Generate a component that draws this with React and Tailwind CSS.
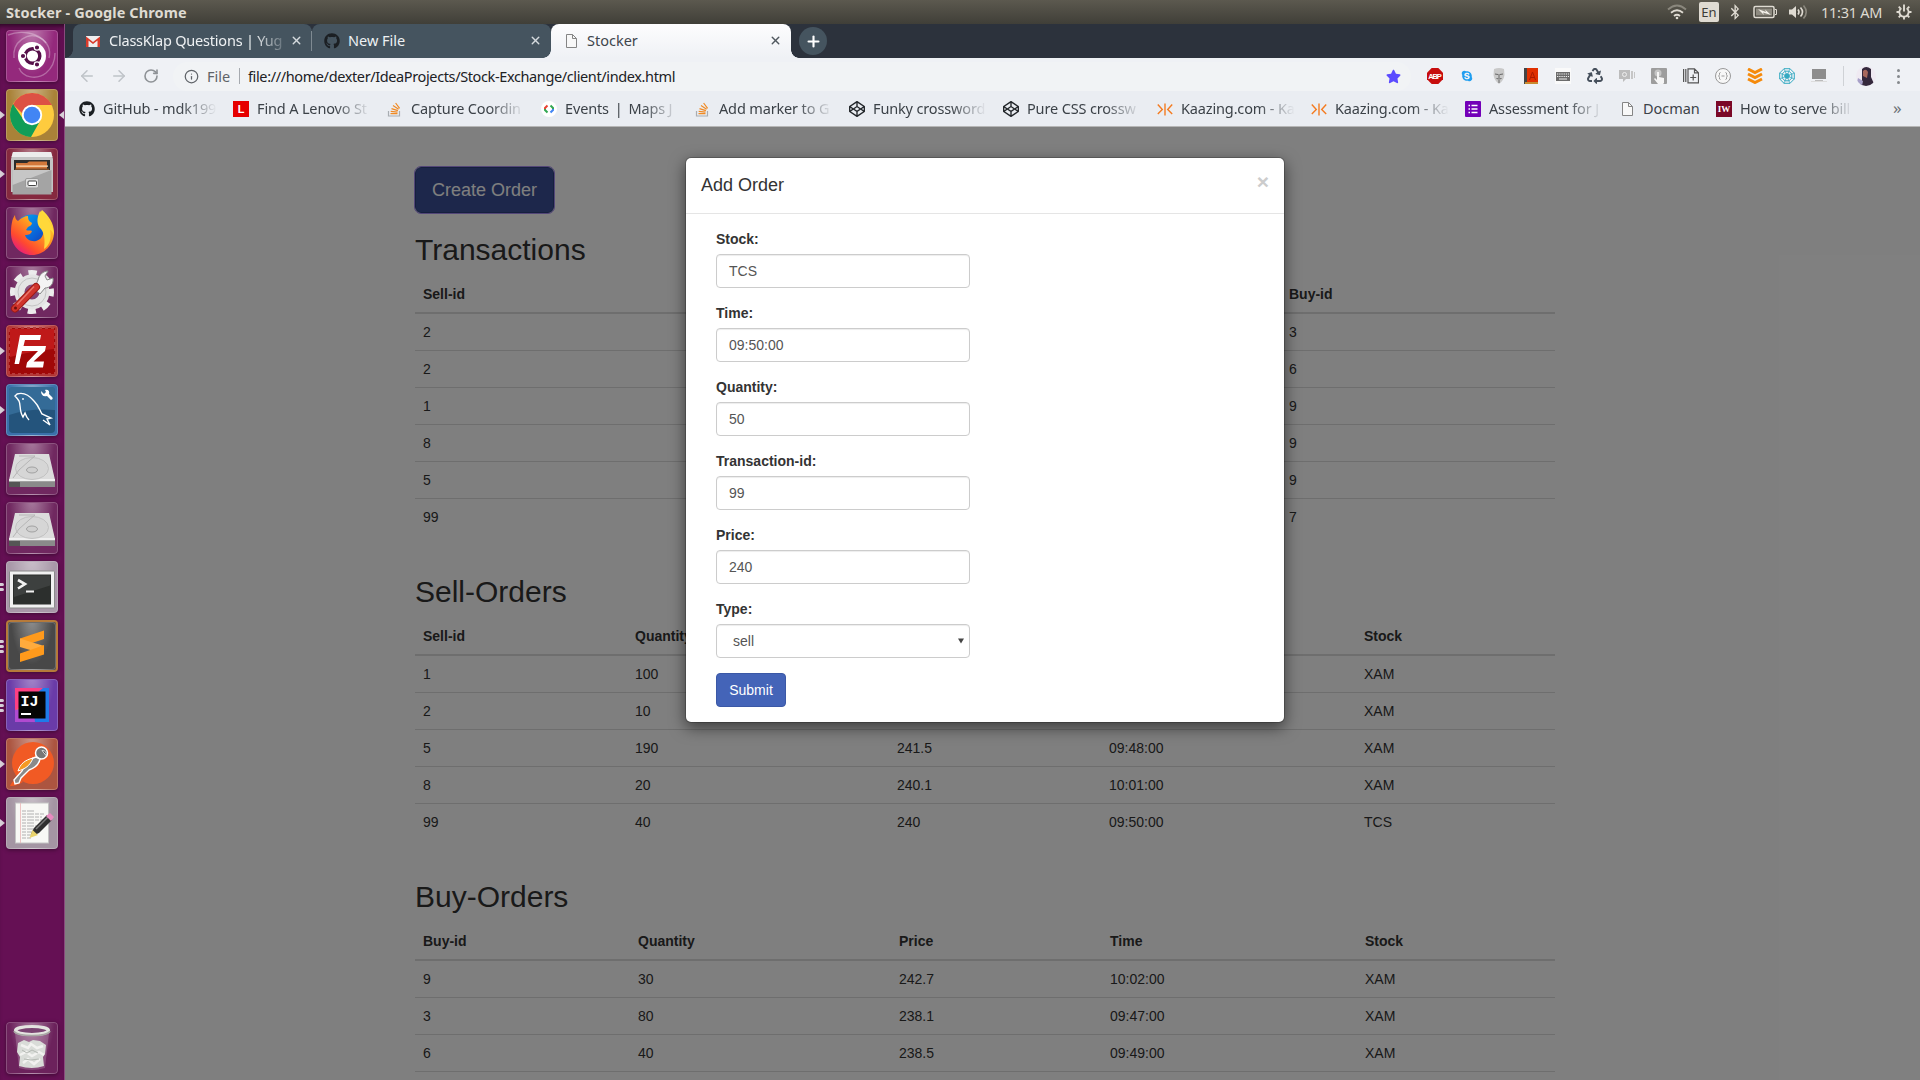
import React from "react";
import { FaGithub, FaBluetoothB, FaCodepen, FaStar, FaRecycle, FaSkype } from "react-icons/fa";
import { ArrowLeft, ArrowRight, RotateCw, X, Plus, Info } from "lucide-react";

const UI = "font-['Noto_Sans',sans-serif]";

/* ---------- launcher glyphs, 52 x 52 each ---------- */
const UbuntuGlyph = () => (
  <svg viewBox="0 0 52 52" className="size-full">
    <g fill="none" stroke="#fff" strokeOpacity=".3" strokeWidth="1.4">
      <path d="M8 28C6 12 22 1 34 8c8 4 11 12 9 20" />
      <path d="M2 5c12-5 30-3 38 8" />
      <path d="M13 38c4 10 18 12 27 5 6-5 9-12 9-20" />
    </g>
    <circle cx="26" cy="26" r="14" fill="#fff" />
    <circle cx="26.500" cy="26" r="7.300" fill="none" stroke="#56104a" strokeWidth="3.400" />
    <g stroke="#fff" strokeWidth="1.200" fill="#56104a">
      <circle cx="17" cy="26" r="2.700" />
      <circle cx="31" cy="17.500" r="2.700" />
      <circle cx="31" cy="34.500" r="2.700" />
    </g>
  </svg>
);
const ChromeGlyph = () => (
  <svg viewBox="0 0 52 52" className="size-full">
    <circle cx="26" cy="26" r="22" fill="#fecb3e" />
    <path d="M26 4A22 22 0 0 1 46 16H26L16 24 7 15.500A22 22 0 0 1 26 4z" fill="#dd5144" />
    <path d="M7 15A22 22 0 0 0 25 48L34 32 26 26 17 30z" fill="#109d58" />
    <circle cx="26" cy="26" r="10.200" fill="#fff" />
    <circle cx="26" cy="26" r="8.300" fill="#4285f4" />
  </svg>
);
const FilesGlyph = () => (
  <svg viewBox="0 0 52 52" className="size-full">
    <path d="M7 4h38l2 7v33H5V11z" fill="#c4c4c4" />
    <path d="M7 4h38l1.500 5h-41z" fill="#ececec" />
    <path d="M8 12h36v10H8z" fill="#2c2c2c" />
    <path d="M10 15h11l2-1.500h18V22H10z" fill="#d2773a" />
    <path d="M10 17.500h32v1.300H10z" fill="#fde0bd" />
    <path d="M9 20.500h34v1.500H9z" fill="#7a4a28" />
    <path d="M6.500 22h39v24.500h-39z" fill="#a4a4a4" />
    <path d="M6.500 22h39L6.500 37z" fill="#c6c6c6" />
    <rect x="19.500" y="30.500" width="13" height="9.500" rx="1.500" fill="#dcdcdc" stroke="#999" />
    <rect x="22" y="33" width="8.500" height="4.500" rx="1" fill="#fff" stroke="#444" />
  </svg>
);
const FirefoxGlyph = () => (
  <svg viewBox="0 0 52 52" className="size-full">
    <defs>
      <linearGradient id="fx1" x1="0.900" y1="0.100" x2="0.200" y2="1">
        <stop offset="0" stopColor="#ffe83e" />
        <stop offset=".4" stopColor="#ff9a1f" />
        <stop offset=".75" stopColor="#ff4a2f" />
        <stop offset="1" stopColor="#e31587" />
      </linearGradient>
      <linearGradient id="fx2" x1="0" y1="0" x2="1" y2="1">
        <stop offset="0" stopColor="#00b3f4" />
        <stop offset=".6" stopColor="#0a5fd6" />
        <stop offset="1" stopColor="#2a2a8c" />
      </linearGradient>
    </defs>
    <circle cx="26" cy="25" r="17.500" fill="url(#fx2)" />
    <path d="M9 8c0 3 1 5 3 6 3-3 7-5 10-5 0 4 1 5 4 7 0 2-2 3-4 4l-2 3c2 1 4 0 6 1-1 3-3 4-7 4 1 4 6 7 11 6 7-2 9-9 6-15-1-2-2-3-4-4 0-6 2-9 4-12 7 6 12 14 12 22 0 13-10 23-22 23S5 38 5 26c0-7 1-14 4-18z" fill="url(#fx1)" />
    <path d="M34 4c5 6 14 13 14 24-1-3-3-5-4-5 2 9-1 16-6 19 1-7 1-15-3-20-4-4-5-10-1-18z" fill="#ffd83a" />
  </svg>
);
const GearGlyph = () => (
  <svg viewBox="0 0 52 52" className="size-full">
    <circle cx="26" cy="26" r="18.500" fill="none" stroke="#ececec" strokeWidth="7" strokeDasharray="8 6.530" strokeDashoffset="4" />
    <circle cx="26" cy="26" r="12.500" fill="none" stroke="#e4e4e4" strokeWidth="10" />
    <circle cx="26" cy="26" r="14" fill="none" stroke="#c4c4c4" strokeWidth="1" />
    <path d="M32 14c1-5 5-9 10-9l-3 5 2 4 6-2c1 6-3 10-8 10l-5 6-6-5z" fill="#f4f4f4" stroke="#888" strokeWidth="1" />
    <path d="M9 42.500 30 21" stroke="#9c1a16" strokeWidth="8" strokeLinecap="round" />
    <path d="M9 42.500 30 21" stroke="#cf342b" strokeWidth="6" strokeLinecap="round" />
    <path d="M11 38.500 28 20.500" stroke="#e8766c" strokeWidth="1.500" />
    <circle cx="9.500" cy="42" r="1.500" fill="#6b0f0c" />
  </svg>
);
const FilezillaGlyph = () => (
  <svg viewBox="0 0 52 52" className="size-full">
    <rect x="3" y="3" width="46" height="46" fill="#a00808" stroke="#b83a3a" strokeWidth="2" strokeDasharray="3 3" />
    <path d="M4 4h44v20q-22 2-44 8z" fill="#cc2121" fillOpacity=".7" />
    <path d="M14 10h21l-1 5H19l-1.500 6H28l-1 5H16l-3 13H8.500z" fill="#fff" />
    <path d="M24 21h16l-1 5-11.500 10.500H38l-1 6H20l1-5 11-11.500h-9z" fill="#fff" />
  </svg>
);
const DolphinGlyph = () => (
  <svg viewBox="0 0 52 52" className="size-full">
    <rect x="3" y="3" width="46" height="46" rx="4" fill="#24547c" />
    <path d="M3 7a4 4 0 0 1 4-4h38a4 4 0 0 1 4 4v19q-24-2-46 5z" fill="#3f7caa" fillOpacity=".6" />
    <path d="M23 36c-2-2-3-4-4-7l-2 4c-4-6-2-12-4-16-2-3-4-5-4-5l2-2c6-2 12 1 17 7 5 5 6 10 8 13l9 4-4 1 3 6-7-5" fill="none" stroke="#fff" strokeWidth="1.400" />
    <circle cx="17" cy="15" r=".9" fill="#fff" />
    <path d="M35 7l3 3 2-2-1-2c3-1 5 1 4 4l3 3c2 2-1 4-2 2l-3-3c-4 1-6-1-6-5z" fill="#fff" />
  </svg>
);
const DriveGlyph = () => (
  <svg viewBox="0 0 52 52" className="size-full">
    <path d="M9 11h34l6 26v7H3v-7z" fill="#dcdcdc" />
    <path d="M3 37h46v7H3z" fill="#555" />
    <path d="M3 36h46v2.500H3z" fill="#f0f0f0" />
    <rect x="14" y="39" width="35" height="5" fill="#8a8a8a" />
    <ellipse cx="26" cy="25.500" rx="16.500" ry="11" fill="#d6d6d6" stroke="#c2c2c2" />
    <ellipse cx="26" cy="27" rx="5.500" ry="3" fill="#cfcfcf" stroke="#a2a2a2" />
    <path d="M13 13h16l-6 5-10 9-6 8" fill="none" stroke="#b6b6b6" />
  </svg>
);
const TerminalGlyph = () => (
  <svg viewBox="0 0 52 52" className="size-full">
    <rect x="3.500" y="10" width="45" height="37" rx="1" fill="#f1f1f1" stroke="#8a8a8a" />
    <rect x="7" y="13.500" width="38" height="30" fill="#2c2f2d" />
    <path d="M8 14.500h36v10L8 36z" fill="#4a4d4b" fillOpacity=".6" />
    <path d="M12 19l7 4-7 4.500" fill="none" stroke="#f1f1f1" strokeWidth="2.600" />
    <path d="M20 30.500h8" stroke="#f1f1f1" strokeWidth="2" />
  </svg>
);
const SublimeGlyph = () => (
  <svg viewBox="0 0 52 52" className="size-full">
    <path d="M14 18.500 38 10.500v8.500L14 27z" fill="#ff9a1c" />
    <path d="M14 18.500 38 26v8L14 27z" fill="#ffab3d" />
    <path d="M38 25v9.500L14 42v-8.500L30 28z" fill="#ff9a1c" />
  </svg>
);
const IdeaGlyph = () => (
  <svg viewBox="0 0 52 52" className="size-full">
    <path d="M9 9h34v34H9z" fill="#1f7bea" />
    <path d="M9 9h25L20 43H9z" fill="#f7923a" />
    <path d="M9 9h28L9 32z" fill="#fe3f83" />
    <path d="M9 31l18-4 2 16H9z" fill="#b04ad0" />
    <rect x="12.500" y="12.500" width="27" height="27" fill="#050505" />
    <text x="14.500" y="27" fontFamily="Liberation Mono" fontWeight="700" fontSize="15" fill="#fff">IJ</text>
    <path d="M15 35h10" stroke="#fff" strokeWidth="2" />
  </svg>
);
const PostmanGlyph = () => (
  <svg viewBox="0 0 52 52" className="size-full">
    <circle cx="27" cy="25" r="21" fill="#f15a24" />
    <path d="M4 48c2-5 5-6 9-8l4 4c-4 2-7 4-13 4z" fill="#f15a24" />
    <circle cx="35.500" cy="15" r="6" fill="#777" stroke="#fff" strokeWidth="1.500" />
    <path d="M36 12.500q5 0 4 5z" fill="#444" stroke="#ddd" />
    <path d="M30 19c-7 2-12 8-14 14l-8 9 1 4 4-1 2-5 8-8c6-2 10-6 11-11z" fill="#8a8a8a" stroke="#fff" strokeWidth="1.400" />
    <path d="M27 20c-8 2-13 6-15 13 7-2 12-5 15-13z" fill="#f59a23" stroke="#fff" />
  </svg>
);
const EditorGlyph = () => (
  <svg viewBox="0 0 52 52" className="size-full">
    <rect x="9.500" y="6" width="33" height="40" fill="#f8f8f5" stroke="#c4c4c4" />
    <path d="M14.500 6v40" stroke="#eab6b6" strokeWidth=".8" />
    <g stroke="#b0b0b0" strokeWidth="1" strokeDasharray="4 1 7 1">
      <path d="M16 14h12M16 17h22M16 20h20M16 23h23M16 26h12M16 29h17M16 32h15M16 35h12M16 38h10M16 41h9" />
    </g>
    <path d="M25 37l3-6L41 18l5 5-13 13-7 3z" fill="#303030" />
    <path d="M23.500 41l3-8 5.500 5z" fill="#e9d36c" />
    <path d="M30 32l12-12" stroke="#7a7a7a" strokeWidth="1.500" />
    <path d="M40 19l4-3 4 4-3 4z" fill="#e88bc0" />
  </svg>
);
const TrashGlyph = () => (
  <svg viewBox="0 0 52 52" className="size-full">
    <path d="M9 11h34l-4 35q-13 4-26 0z" fill="#fff" fillOpacity=".18" />
    <path d="M12 21l6-3 5 2 4-2 7 1 6 4-1 9-2 3 1 9q-12 4-25 0l1-9-3-5z" fill="#d9dcd8" />
    <path d="M15 23l7 3 3-4 6 4 6-2M14 33l6-3 6 4 7-4 5 3M17 41l5-4 6 5 6-5" stroke="#f2f2f0" strokeWidth="2.500" fill="none" />
    <path d="M16 28l5 3 5-3 6 3M18 37l7 1 8-1" stroke="#b4b9b3" fill="none" />
    <ellipse cx="26" cy="8.500" rx="16.500" ry="4" fill="#7a4472" stroke="#e4e4e0" strokeWidth="3.200" />
    <path d="M8 9c2 6 34 6 36 0" fill="none" stroke="#a8a8a4" strokeWidth="1.500" />
  </svg>
);

const LAUNCHER = [
  { n: "ubuntu", g: UbuntuGlyph, bg: "bg-[#94297c]", left: 0 },
  { n: "chrome", g: ChromeGlyph, bg: "bg-[#a98238]", left: 1, focus: true },
  { n: "files", g: FilesGlyph, bg: "bg-[#85293f]", left: 1 },
  { n: "firefox", g: FirefoxGlyph, bg: "bg-[#702860]", left: 0 },
  { n: "settings", g: GearGlyph, bg: "bg-[#702860]", left: 0 },
  { n: "filezilla", g: FilezillaGlyph, bg: "bg-[#b03434]", left: 1 },
  { n: "workbench", g: DolphinGlyph, bg: "bg-[#3a70aa]", left: 1 },
  { n: "drive1", g: DriveGlyph, bg: "bg-[#702860]", left: 0 },
  { n: "drive2", g: DriveGlyph, bg: "bg-[#702860]", left: 0 },
  { n: "terminal", g: TerminalGlyph, bg: "bg-[#a898a8]", left: 2 },
  { n: "sublime", g: SublimeGlyph, bg: "bg-[#484848] border-2 border-[#b67a3a]", left: 3 },
  { n: "idea", g: IdeaGlyph, bg: "bg-[#6a3ba8]", left: 3 },
  { n: "postman", g: PostmanGlyph, bg: "bg-[#ac5540]", left: 1 },
  { n: "gedit", g: EditorGlyph, bg: "bg-[#a495a3]", left: 1 },
];

function Tile({ item }) {
  const Glyph = item.g;
  return (
    <div className="relative flex h-[52px] w-full items-center pl-[6px]">
      {item.left === 1 && <div className="absolute left-0 h-0 w-0 border-y-4 border-l-[5px] border-y-transparent border-l-[#d8d0d8]" />}
      {item.left > 1 && (
        <div className="absolute left-0 flex flex-col gap-[2px]">
          {Array.from({ length: item.left }, (_, i) => (
            <div key={i} className="h-[3px] w-[4px] rounded-r-full bg-[#d8d0d8]" />
          ))}
        </div>
      )}
      <div className={`relative size-[52px] overflow-hidden rounded-[4px] shadow-[0_1px_4px_rgba(0,0,0,0.4)] ${item.bg}`}>
        <div className="absolute inset-0 rounded-[4px] border border-white/20 bg-[radial-gradient(ellipse_at_50%_-10%,rgba(255,255,255,0.4),rgba(255,255,255,0)_65%)]" />
        <div className={item.n === "sublime" ? "relative -m-[2px] size-[52px]" : "relative size-full"}>
          <Glyph />
        </div>
      </div>
      {item.focus && <div className="absolute right-0 h-0 w-0 border-y-4 border-r-[5px] border-y-transparent border-r-[#d8d0d8]" />}
    </div>
  );
}

/* ---------- small icons ---------- */
const PageIcon = () => (
  <svg viewBox="0 0 16 16" className="size-4 shrink-0" fill="none" stroke="#858585" strokeWidth="1">
    <path d="M3.500 1.500h6l4 4v9h-10z" fill="#f8f8f8" />
    <path d="M9.500 1.500v4h4" />
  </svg>
);
const MailIcon = () => (
  <svg viewBox="0 0 16 16" className="size-4 shrink-0">
    <path d="M1 3h14v11H1z" fill="#eee" />
    <path d="M1 14V3.500L8 9l7-5.500V14h-2.500V7.500L8 11 3.500 7.500V14z" fill="#d93b2b" />
  </svg>
);
const LenovoIcon = () => <div className="flex size-4 shrink-0 items-center justify-center bg-[#e60000] text-[11px] font-bold text-white font-['Liberation_Sans',sans-serif]">L</div>;
const IwIcon = () => <div className="flex size-4 shrink-0 items-center justify-center bg-[#7b0827] text-[9px] font-bold text-white font-['Liberation_Serif',serif]">IW</div>;
const DevIcon = () => (
  <svg viewBox="0 0 16 16" className="size-4 shrink-0" fill="none" strokeWidth="2">
    <circle cx="8" cy="8" r="8" fill="#fff" />
    <path d="M6.500 4.500 4 7v1" stroke="#ea4335" />
    <path d="M4 8v1l2.500 2.500" stroke="#34a853" />
    <path d="M9.500 4.500L12 7v1" stroke="#34a853" />
    <path d="M12 8v1l-2.500 2.500" stroke="#4285f4" />
  </svg>
);
const KaazingIcon = () => (
  <svg viewBox="0 0 16 16" className="size-4 shrink-0" fill="none" stroke="#f47b20" strokeWidth="1.400">
    <path d="M.8 3.500l4.500 5-4.500 4.500M8 2.500v12M15.200 3.500l-4.500 5 4.500 4.500" />
  </svg>
);
const FormsIcon = () => (
  <svg viewBox="0 0 16 16" className="size-4 shrink-0">
    <rect width="16" height="16" rx="1" fill="#7300b8" />
    <path d="M3.500 4.500h1.500M3.500 8h1.500M3.500 11.500h1.500M6.500 4.500h6M6.500 8h6M6.500 11.500h6" stroke="#fff" strokeWidth="1.600" />
  </svg>
);
const Git = () => <FaGithub className="size-4 shrink-0 text-[#1b1f23]" />;
const Stack = () => (
  <svg viewBox="0 0 16 16" className="size-4 shrink-0" fill="none">
    <path d="M1.500 10v5h11v-5" stroke="#a8adb2" strokeWidth="1.200" />
    <path d="M3.500 12.600h7M3.700 10.300l6.800.8M4.500 7.600l6.400 2M6 4.600l5.600 3.600M8.600 2l4 5.300" stroke="#f08a24" strokeWidth="1.200" />
  </svg>
);
const Pen = () => <FaCodepen className="size-4 shrink-0 text-[#24282c]" />;

const BOOKMARKS = [
  [Git, "GitHub - mdk199"],
  [LenovoIcon, "Find A Lenovo St"],
  [Stack, "Capture Coordin"],
  [DevIcon, "Events\u2009 |\u2009 Maps J"],
  [Stack, "Add marker to G"],
  [Pen, "Funky crossword"],
  [Pen, "Pure CSS crossw"],
  [KaazingIcon, "Kaazing.com - Ka"],
  [KaazingIcon, "Kaazing.com - Ka"],
  [FormsIcon, "Assessment for J"],
  [PageIcon, "Docman", true],
  [IwIcon, "How to serve bill"],
];

const EXT = [
  <svg key="abp" viewBox="0 0 16 16" className="size-4"><path d="M4.700 0h6.600L16 4.700v6.600L11.300 16H4.700L0 11.300V4.700z" fill="#c70d0d" /><text x="8" y="10.900" textAnchor="middle" fontSize="7.500" fontWeight="700" fontFamily="Liberation Sans" fill="#fff" textLength="13.500">ABP</text></svg>,
  <FaSkype key="skype" className="size-3 text-[#1f9ef0]" />,
  <svg key="mask" viewBox="0 0 16 16" className="size-4"><path d="M3 1q5-2 10 0l.5 6q-1 6-5.500 9-4.500-3-5.500-9z" fill="#c9c9c9" /><path d="M4 6l3 .5M9 6.500l3-.5M8 6v4M5.500 10.500q2.500 1 5 0M8 12v3" stroke="#666" fill="none" /></svg>,
  <svg key="book" viewBox="0 0 16 16" className="size-4"><path d="M1 0h3v16H1z" fill="#444" /><path d="M4 0h11v14H4z" fill="#e03000" /><path d="M2 14h13v2H2z" fill="#c98b2f" /><path d="M6.500 12l3-8 3 8M7.500 9.500h4" stroke="#a91b00" fill="none" /></svg>,
  <svg key="kbd" viewBox="0 0 16 16" className="size-4"><rect width="16" height="16" fill="#fafafa" /><rect x="1" y="4" width="14" height="9" fill="#6c6c6c" /><path d="M2 6h12M2 8.500h12" stroke="#eee" strokeDasharray="1.300 .9" strokeWidth="1.200" /><path d="M4 11h8" stroke="#eee" /></svg>,
  <FaRecycle key="rec" className="size-4 text-[#46505c]" />,
  <svg key="chat" viewBox="0 0 16 16" className="size-4"><path d="M0 2h11v9H7l-3 3v-3H0z" fill="#bcbcbc" /><path d="M12 3h2v8h-2zM15 4h1v6h-1z" fill="#c6c6c6" /><circle cx="5.500" cy="6.500" r="2" stroke="#eee" fill="none" /></svg>,
  <svg key="hand" viewBox="0 0 16 16" className="size-4"><rect width="16" height="16" rx="1" fill="#9d9d9d" /><circle cx="7" cy="5" r="3.500" fill="#c5c5c5" /><path d="M6 4h2v5l5 1v5l-1 1H7l-4-5 1-1 2 2z" fill="#f5f5f5" /></svg>,
  <svg key="pages" viewBox="0 0 16 16" className="size-4" fill="none" stroke="#555" strokeWidth="1.200"><path d="M.6 1v13M2.800 1v13" /><path d="M5 .8h6.500l4 4v10H5zM11.500.8v4h4M10.200 6.500v6M7.200 9.500h6" /></svg>,
  <svg key="brace" viewBox="0 0 16 16" className="size-4" fill="none" stroke="#999"><circle cx="8" cy="8" r="7.500" fill="#f7f7f7" /><path d="M5.500 4.500q-1.500 0-1 2 0 1.200-1 1.500 1 .3 1 1.500-.5 2 1 2M10.500 4.500q1.500 0 1 2 0 1.200 1 1.500-1 .3-1 1.500.5 2-1 2M6.500 8h3" /></svg>,
  <svg key="chev" viewBox="0 0 16 16" className="size-4" fill="none" stroke="#f58a0b" strokeWidth="3"><path d="M1 1l7 3.500L15 1M1 6l7 3.500L15 6M1 11l7 3.500 7-3.500" /></svg>,
  <svg key="web" viewBox="0 0 16 16" className="size-4" fill="none" stroke="#35aac2"><path d="M5 .7h6L15.300 5v6L11 15.300H5L.7 11V5z" /><path d="M6 3.200h4L12.800 6v4L10 12.800H6L3.200 10V6z" /><path d="M5 .7l6 14.600M11 .7L5 15.300M.7 5l14.600 6M15.300 5L.7 11" strokeWidth=".7" /><circle cx="8" cy="8" r="2.300" fill="#35aac2" /></svg>,
  <svg key="mon" viewBox="0 0 16 16" className="size-4"><path d="M1 1h14v10H1z" fill="#8d8d8d" /><path d="M0 13h16v1H0z" fill="#ddd" /><path d="M4 12h8v1H4z" fill="#bbb" /></svg>,
];

function Tab({ icon, title, active, width, fade, divider }) {
  return (
    <div className={`relative flex h-[34px] items-center rounded-t-[8px] pl-[12px] pr-[9px] ${width} ${active ? "bg-gradient-to-b from-[#fdfdfe] to-[#eff1f5] text-[#3f464d]" : "bg-[#45545f] text-[#eef1f3]"}`}>
      {icon}
      <span className={`ml-[8px] flex-1 overflow-hidden whitespace-nowrap pb-[2px] text-[14.500px] ${fade ? "tracking-[-0.220px] [mask-image:linear-gradient(to_right,black_82%,rgba(0,0,0,0.15))]" : ""}`}>{title}</span>
      <X className={`mb-px ml-[5px] size-[13px] ${active ? "text-[#50585f]" : "text-[#d5dade]"}`} strokeWidth={2.600} />
      {divider && <div className="absolute right-0 top-[7px] h-5 w-px bg-[#7f8a92]" />}
    </div>
  );
}

function Chrome() {
  return (
    <div className={`shrink-0 ${UI}`}>
      <div className="flex h-[34px] bg-[#2c323c] pl-[8px]">
        <div className="relative flex">
          <div className="absolute -left-2 bottom-0 size-2 bg-[radial-gradient(circle_at_0_0,transparent_7.500px,#45545f_8px)]" />
          <Tab icon={<MailIcon />} title="ClassKlap Questions | Yug" width="w-[239px]" fade divider />
          <Tab icon={<Git />} title="New File" width="w-[239px]" />
          <div className="relative">
            <div className="absolute -left-2 bottom-0 size-2 bg-[radial-gradient(circle_at_0_0,transparent_7.500px,#eff1f5_8px)]" />
            <Tab icon={<PageIcon />} title="Stocker" width="w-[240px]" active />
            <div className="absolute -right-2 bottom-0 size-2 bg-[radial-gradient(circle_at_100%_0,transparent_7.500px,#eff1f5_8px)]" />
          </div>
        </div>
        <div className="ml-[8px] mt-[3px] flex size-[28px] items-center justify-center rounded-full bg-[#45545f]">
          <Plus className="size-[17px] text-white" strokeWidth={3} />
        </div>
      </div>
      <div className="flex h-[33px] items-center bg-[#eff1f5] pt-[3px]">
        <div className="flex w-[108px] items-center pl-[13px] text-[#bfc3c8]">
          <ArrowLeft className="size-[18px]" />
          <ArrowRight className="ml-[14px] size-[18px]" />
          <RotateCw className="ml-[15px] size-[16px] text-[#8e9296]" strokeWidth={2.400} />
        </div>
        <div className="flex h-[29px] w-[1238px] items-center rounded-full bg-[#f1f3f5] pl-[11px] text-[14.500px] text-[#5f6368]">
          <Info className="size-[15px]" />
          <span className="ml-[8px] w-[24px] whitespace-nowrap">File</span>
          <div className="ml-[8px] h-4 w-px bg-[#a6aaaf]" />
          <span className="ml-[8px] whitespace-nowrap tracking-[-0.380px] text-[#202124]">file:///home/dexter/IdeaProjects/Stock-Exchange/client/index.html</span>
          <FaStar className="ml-auto mr-[10px] size-[15px] text-[#5b4bff]" />
        </div>
        <div className="ml-[8px] flex">
          {EXT.map((e) => (
            <div key={e.key} className="flex w-8 items-center justify-center">{e}</div>
          ))}
        </div>
        <div className="ml-[8px] h-5 w-px bg-[#cfd2d6]" />
        <div className="ml-[12px] size-5 overflow-hidden rounded-full bg-[#efeaf2]">
          <svg viewBox="0 0 20 20"><path d="M6 3q4-4 9 0v8l4 9H3l3-6z" fill="#34283c" /><path d="M7 5q3-3 5 1l-1 6-4-2z" fill="#a8685c" /><path d="M2 12l5 3-1 5H0z" fill="#a7a0c8" /></svg>
        </div>
        <div className="ml-[21px] flex flex-col gap-[3px]">
          <div className="size-[3px] rounded-full bg-[#85898d]" />
          <div className="size-[3px] rounded-full bg-[#85898d]" />
          <div className="size-[3px] rounded-full bg-[#85898d]" />
        </div>
      </div>
      <div className="flex h-[36px] items-center gap-[16px] border-b border-[#b6b6b6] bg-[#eaedf2] pl-[14px] text-[14.500px] text-[#3c4248]">
        {BOOKMARKS.map(([Icon, label, short], i) => (
          <div key={i} className="flex items-center gap-2">
            <Icon />
            <span className={`overflow-hidden whitespace-nowrap pb-[2px] ${short ? "w-[57px] tracking-[-0.050px]" : "w-[114px] tracking-[-0.150px] [mask-image:linear-gradient(to_right,black_68%,transparent)]"}`}>{label}</span>
          </div>
        ))}
        <span className="ml-[23px] pb-[2px] text-[17px] text-[#6c7176]">»</span>
      </div>
    </div>
  );
}

/* ---------- page ---------- */
function Table({ cols, head, rows }) {
  return (
    <table className="mb-[40px] w-full table-fixed border-collapse text-left">
      <colgroup>{cols.map((c, i) => <col key={i} className={c} />)}</colgroup>
      <thead>
        <tr>{head.map((h, i) => <th key={i} className="h-[37px] border-b-2 border-[#ddd] p-2 font-bold">{h}</th>)}</tr>
      </thead>
      <tbody>
        {rows.map((r, i) => (
          <tr key={i}>{r.map((c, j) => <td key={j} className="border-t border-[#ddd] p-2">{c}</td>)}</tr>
        ))}
      </tbody>
    </table>
  );
}
const Heading = ({ children }) => <h2 className="mb-[10px] text-[30px] leading-[33px]">{children}</h2>;

function Page() {
  return (
    <div className="h-full overflow-hidden bg-white pt-[40px]">
      <div className="ml-[350px] w-[1140px]">
        <button className="mb-[20px] block h-[46px] w-[139px] rounded-[6px] border border-[#2c3f7c] bg-[#3a4f96] text-[18px] text-white outline-1 outline-[#a58cf0]">Create Order</button>
        <Heading>Transactions</Heading>
        <Table
          cols={["w-[866px]", "w-[274px]"]}
          head={["Sell-id", "Buy-id"]}
          rows={[["2", "3"], ["2", "6"], ["1", "9"], ["8", "9"], ["5", "9"], ["99", "7"]]}
        />
        <Heading>Sell-Orders</Heading>
        <Table
          cols={["w-[212px]", "w-[262px]", "w-[212px]", "w-[255px]", "w-[199px]"]}
          head={["Sell-id", "Quantity", "", "", "Stock"]}
          rows={[
            ["1", "100", "", "", "XAM"],
            ["2", "10", "", "", "XAM"],
            ["5", "190", "241.5", "09:48:00", "XAM"],
            ["8", "20", "240.1", "10:01:00", "XAM"],
            ["99", "40", "240", "09:50:00", "TCS"],
          ]}
        />
        <Heading>Buy-Orders</Heading>
        <Table
          cols={["w-[215px]", "w-[261px]", "w-[211px]", "w-[255px]", "w-[198px]"]}
          head={["Buy-id", "Quantity", "Price", "Time", "Stock"]}
          rows={[
            ["9", "30", "242.7", "10:02:00", "XAM"],
            ["3", "80", "238.1", "09:47:00", "XAM"],
            ["6", "40", "238.5", "09:49:00", "XAM"],
            ["", "", "", "", ""],
          ]}
        />
      </div>
    </div>
  );
}

function Modal() {
  const fields = [["Stock:", "TCS"], ["Time:", "09:50:00"], ["Quantity:", "50"], ["Transaction-id:", "99"], ["Price:", "240"]];
  const box = "flex h-[34px] w-[254px] items-center rounded-[4px] border border-[#ccc] text-[#555] shadow-[inset_0_1px_1px_rgba(0,0,0,0.075)]";
  return (
    <div className="mt-[30px] ml-[620px] h-[566px] w-[600px] rounded-[6px] border border-black/20 bg-white bg-clip-padding shadow-[0_5px_15px_rgba(0,0,0,0.5)]">
      <div className="flex h-[56px] items-start justify-between border-b border-[#e5e5e5] p-[15px]">
        <h4 className="text-[18px] leading-[24px]">Add Order</h4>
        <span className="-mt-[2px] text-[21px] leading-[21px] font-bold text-[#ccc]">×</span>
      </div>
      <div className="px-[30px] pt-[15px]">
        {fields.map(([l, v]) => (
          <div key={l} className="mb-[15px]">
            <div className="mb-[5px] font-bold">{l}</div>
            <div className={`${box} px-3`}>{v}</div>
          </div>
        ))}
        <div className="mb-[15px]">
          <div className="mb-[5px] font-bold">Type:</div>
          <div className={`${box} justify-between pl-4 pr-[5px]`}>
            sell
            <svg viewBox="0 0 7 6" className="h-[6px] w-[6px]"><path d="M0 0h7L3.500 6z" fill="#444" /></svg>
          </div>
        </div>
        <button className="block h-[34px] w-[70px] rounded-[4px] border border-[#3b58a6] bg-[#4464b8] text-white">Submit</button>
      </div>
    </div>
  );
}

function TopBar() {
  return (
    <div className={`flex h-6 shrink-0 items-center bg-gradient-to-b from-[#5c594f] to-[#403f38] pl-[6px] text-[#dfdbd2] ${UI}`}>
      <span className="pb-px text-[14.500px] font-bold tracking-[0.100px]">Stocker - Google Chrome</span>
      <div className="ml-auto flex items-center">
        <svg viewBox="0 0 20 16" className="h-4 w-5" fill="none" strokeWidth="1.800">
          <path d="M1 5.500q9-8 18 0" stroke="#8a877d" />
          <path d="M4 8.800q6-5 12 0M7 12q3-2.500 6 0" stroke="#dfdbd2" />
          <circle cx="10" cy="14" r="1.300" fill="#dfdbd2" />
        </svg>
        <div className="ml-[12px] flex h-5 w-[20px] items-center justify-center rounded-[2px] bg-[#dfdbd2] text-[13px] text-[#3c3b37]">En</div>
        <FaBluetoothB className="ml-[8px] size-4" />
        <svg viewBox="0 0 24 14" className="ml-[10px] h-[14px] w-6" fill="none" stroke="#dfdbd2">
          <rect x="1" y="1.500" width="20" height="11" rx="1.500" strokeWidth="1.500" />
          <rect x="3" y="3.500" width="16" height="7" fill="#8d8a80" stroke="none" />
          <path d="M22 4.500h1.500v5H22" />
          <path d="M5 4l8 3-1-2.500 6 5.500-8-2.500 1 2.500z" fill="#f4f1ea" stroke="none" />
        </svg>
        <svg viewBox="0 0 20 16" className="ml-[11px] h-4 w-5" fill="none" stroke="#dfdbd2" strokeWidth="1.600">
          <path d="M1 5.500h3l4-3.500v12L4 10.500H1z" fill="#dfdbd2" stroke="none" />
          <path d="M10 5.500q2 2.500 0 5M12.500 3.500q4 4.500 0 9" />
          <path d="M15.500 1.500q5.500 6.500 0 13" stroke="#8a877d" />
        </svg>
        <span className="ml-[13px] w-[63px] whitespace-nowrap pb-px text-[14.500px] tracking-[-0.250px]">11:31 AM</span>
        <svg viewBox="0 0 16 16" className="mr-[8px] ml-[12px] size-4" fill="none" stroke="#dfdbd2">
          <path d="M5.400 4.200a4.600 4.600 0 1 0 5.200 0" strokeWidth="1.800" />
          <path d="M8 .5v7M2.700 2.700l1.700 1.700M13.300 2.700l-1.700 1.700M.5 8H3M13 8h2.500M2.700 13.300l1.700-1.700M13.300 13.300l-1.700-1.700M8 13v2.500" strokeWidth="1.900" />
        </svg>
      </div>
    </div>
  );
}

export default function App() {
  return (
    <div className="flex h-[1080px] w-[1920px] flex-col overflow-hidden bg-white text-[14px] leading-[20px] text-[#333] font-['Liberation_Sans',Arial,sans-serif]">
      <TopBar />
      <div className="flex min-h-0 flex-1">
        <aside className="flex w-[65px] shrink-0 flex-col gap-[7px] border-r border-[#8a4a7e] bg-[#651054] pt-[6px] pb-[6px] shadow-[inset_0_5px_5px_-3px_rgba(0,0,0,0.6)]">
          {LAUNCHER.map((it) => <Tile key={it.n} item={it} />)}
          <div className="mt-auto"><Tile item={{ n: "trash", g: TrashGlyph, bg: "bg-[#6c225c]", left: 0 }} /></div>
        </aside>
        <main className="flex min-w-0 flex-1 flex-col">
          <Chrome />
          <div className="relative min-h-0 flex-1">
            <Page />
            <div className="absolute inset-0 flex items-start bg-black/50">
              <Modal />
            </div>
          </div>
        </main>
      </div>
    </div>
  );
}
